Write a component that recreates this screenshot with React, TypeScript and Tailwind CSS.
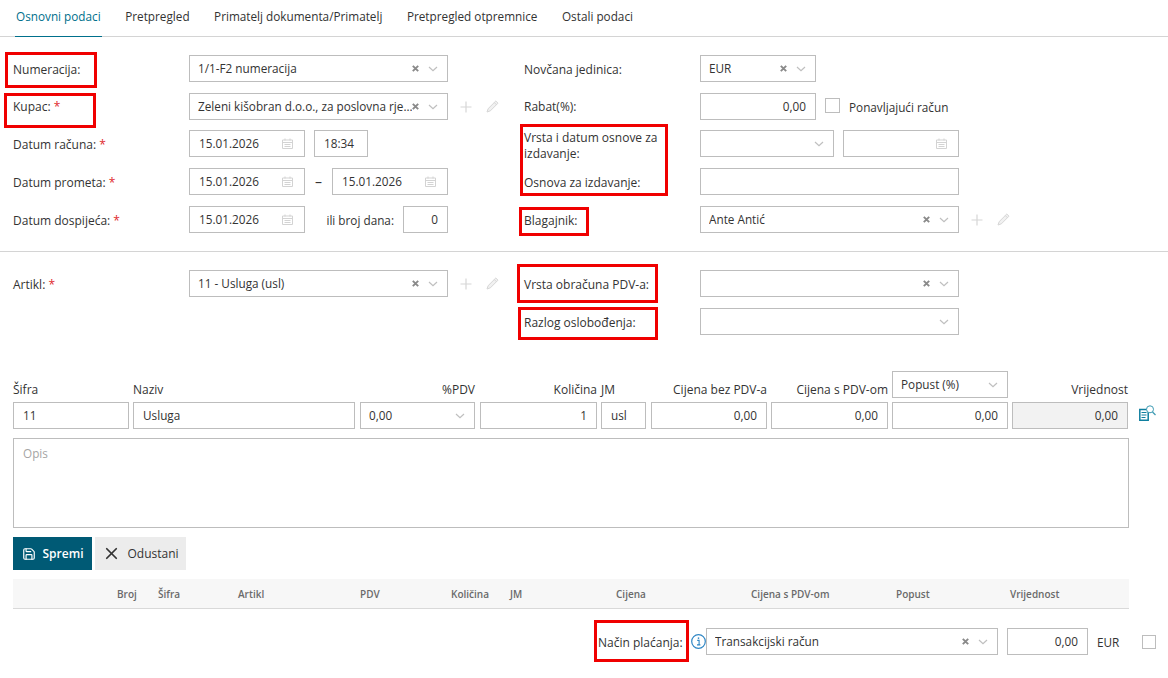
import { Save, X } from "lucide-react";
import type { ReactNode } from "react";

const tabs = ["Osnovni podaci", "Pretpregled", "Primatelj dokumenta/Primatelj", "Pretpregled otpremnice", "Ostali podaci"];

const itemColumns = "grid grid-cols-[120px_227px_120px_121px_50px_120px_121px_120px_116px]";

const listColumns = [
  { label: "", width: "w-[104px]" },
  { label: "Broj", width: "w-[41px]" },
  { label: "Šifra", width: "w-[80px]" },
  { label: "Artikl", width: "w-[122px]" },
  { label: "PDV", width: "w-[91px]" },
  { label: "Količina", width: "w-[59px]" },
  { label: "JM", width: "w-[106px]" },
  { label: "Cijena", width: "w-[135px]" },
  { label: "Cijena s PDV-om", width: "w-[145px]" },
  { label: "Popust", width: "w-[114px]" },
  { label: "Vrijednost", width: "w-[100px]" },
];

function ClearIcon() {
  return (
    <svg width="7" height="7" viewBox="0 0 7 7" className="shrink-0 mt-[2px]">
      <path d="M.8.8l5.4 5.4M6.2.8L.8 6.2" stroke="#8a8a8a" strokeWidth="1.9" />
    </svg>
  );
}

function Chevron() {
  return (
    <svg width="10" height="6" viewBox="0 0 10 6" className="shrink-0 mt-[2px]">
      <path d="M1 1l4 3.6L9 1" fill="none" stroke="#bfbfbf" strokeWidth="1.2" />
    </svg>
  );
}

function CalendarIcon() {
  return (
    <svg width="11" height="11" viewBox="0 0 11 11" className="shrink-0 mt-[2px]">
      <path d="M.5 2h10v8.5H.5zM.5 4.5h10M3 .5v2M8 .5v2M2.5 6.5h6M2.5 8.5h6" fill="none" stroke="#d3d3d3" />
    </svg>
  );
}

function AddEdit() {
  return (
    <div className="flex items-center h-[27px] gap-[14px] ml-[12px] shrink-0">
      <svg width="12" height="12" viewBox="0 0 12 12">
        <path d="M6 .5v11M.5 6h11" stroke="#d6d6d6" strokeWidth="1.2" />
      </svg>
      <svg width="13" height="13" viewBox="0 0 13 13">
        <path d="M9.8 1L12 3.2 4.4 10.8 1 12l1.2-3.4zM8.3 2.6l2.1 2.1" fill="#f1f1f1" stroke="#d6d6d6" />
      </svg>
    </div>
  );
}

function InfoIcon() {
  return (
    <svg width="15" height="15" viewBox="0 0 15 15" className="shrink-0">
      <circle cx="7.5" cy="7.5" r="6.8" fill="none" stroke="#2f86c4" strokeWidth="1.2" />
      <path d="M6.2 6.4h1.9v4.4M6 10.9h3.4" fill="none" stroke="#2f86c4" strokeWidth="1.1" />
      <rect x="6.8" y="3.4" width="1.4" height="1.5" fill="#2f86c4" />
    </svg>
  );
}

function LookupIcon() {
  return (
    <svg width="17" height="16" viewBox="0 0 17 16" className="absolute left-[1139px] top-[405px]">
      <path d="M.8 4.5h8.4v10.7H.8z" fill="none" stroke="#0f7f9f" strokeWidth="1.5" />
      <path d="M2.5 7.5h5M2.5 10h5M2.5 12.5h4" stroke="#0f7f9f" />
      <circle cx="11" cy="4.3" r="3.5" fill="white" stroke="#3d9ab3" />
      <path d="M13.5 7l3 3" stroke="#3d9ab3" strokeWidth="1.2" />
    </svg>
  );
}

function Box({ className = "", children }: { className?: string; children?: ReactNode }) {
  return (
    <div className={`h-[27px] border border-[#bdbdbd] bg-white flex items-center pb-[2px] shrink-0 ${className}`}>
      {children}
    </div>
  );
}

function SelectBox({ className, value, clear = true }: { className: string; value?: string; clear?: boolean }) {
  return (
    <Box className={`pl-[8px] pr-[9px] ${className}`}>
      <span className="flex-1 min-w-0 whitespace-nowrap overflow-hidden">{value}</span>
      {clear && <ClearIcon />}
      <span className="ml-[9px] flex"><Chevron /></span>
    </Box>
  );
}

function DateBox({ value = "", className = "w-[116px]" }: { value?: string; className?: string }) {
  return (
    <Box className={`pl-[9px] pr-[11px] justify-between ${className}`}>
      <span>{value}</span>
      <CalendarIcon />
    </Box>
  );
}

function NumberBox({ value, className }: { value: string; className: string }) {
  return <Box className={`justify-end pr-[9px] ${className}`}>{value}</Box>;
}

function Label({ text, required = false, className = "" }: { text: string; required?: boolean; className?: string }) {
  return (
    <div className={`text-[12px] font-medium pt-[2px] shrink-0 ${className}`}>
      {text}
      {required && <span className="text-[#e0282e]"> *</span>}
    </div>
  );
}

function Row({ height = "h-[38px]", labelWidth = "w-[176px]", label, children }: { height?: string; labelWidth?: string; label: ReactNode; children: ReactNode }) {
  return (
    <div className={`flex items-start ${height}`}>
      <div className={`shrink-0 h-[27px] flex items-center ${labelWidth}`}>{label}</div>
      {children}
    </div>
  );
}

function Highlight({ className }: { className: string }) {
  return <div className={`absolute border-[3px] border-[#f00000] ${className}`} />;
}

export default function App() {
  return (
    <div className="relative w-[1168px] h-[678px] bg-white overflow-hidden text-[11.75px] leading-[16px] text-[#333333] font-['Open_Sans',sans-serif]">
      {/* Tabs */}
      <div className="h-[37px] border-b border-[#d4d4d4] flex pl-[15px]">
        {tabs.map((tab, i) => (
          <div
            key={tab}
            className={`h-[37px] pt-[8px] px-[1px] mr-[22.5px] ${i === 0 ? "border-b border-[#00708c] text-[#00708c]" : ""}`}
          >
            {tab}
          </div>
        ))}
      </div>

      {/* Header form */}
      <div className="h-[215px] border-b border-[#d4d4d4] pt-[18px] flex">
        <div className="w-[511px] pl-[13px] shrink-0">
          <Row label={<Label text="Numeracija:" />}>
            <SelectBox className="w-[259px]" value="1/1-F2 numeracija" />
          </Row>
          <Row height="h-[37px]" label={<Label text="Kupac:" required className="!pt-[1px]" />}>
            <SelectBox className="w-[259px]" value="Zeleni kišobran d.o.o., za poslovna rje..." />
            <AddEdit />
          </Row>
          <Row label={<Label text="Datum računa:" required />}>
            <DateBox value="15.01.2026" />
            <Box className="w-[54px] ml-[9px] pl-[9px]">18:34</Box>
          </Row>
          <Row label={<Label text="Datum prometa:" required />}>
            <DateBox value="15.01.2026" />
            <div className="w-[27px] h-[27px] flex items-center justify-center text-[14px]">–</div>
            <DateBox value="15.01.2026" />
          </Row>
          <Row label={<Label text="Datum dospijeća:" required />}>
            <DateBox value="15.01.2026" />
            <div className="w-[98px] h-[27px] flex items-center justify-end pr-[9px]">ili broj dana:</div>
            <NumberBox value="0" className="w-[45px]" />
          </Row>
        </div>
        <div className="flex-1">
          <Row labelWidth="w-[189px]" label={<Label text="Novčana jedinica:" className="ml-[13px]" />}>
            <SelectBox className="w-[116px]" value="EUR" />
          </Row>
          <Row height="h-[37px]" labelWidth="w-[189px]" label={<Label text="Rabat(%):" className="ml-[13px] !pt-[1px]" />}>
            <NumberBox value="0,00" className="w-[116px]" />
            <div className="w-[15px] h-[15px] border border-[#bdbdbd] ml-[9px] mt-[5px]" />
            <div className="ml-[9px] h-[27px] flex items-center">Ponavljajući račun</div>
          </Row>
          <div className="flex items-start h-[38px]">
            <div className="w-[189px] shrink-0 pl-[13px] pr-[20px] text-[12px] font-medium">
              Vrsta i datum osnove za izdavanje:
            </div>
            <SelectBox className="w-[134px]" clear={false} />
            <DateBox className="w-[116px] ml-[9px]" />
          </div>
          <Row labelWidth="w-[189px]" label={<Label text="Osnova za izdavanje:" className="ml-[13px]" />}>
            <Box className="w-[259px]" />
          </Row>
          <Row labelWidth="w-[189px]" label={<Label text="Blagajnik:" className="ml-[13px]" />}>
            <SelectBox className="w-[259px]" value="Ante Antić" />
            <AddEdit />
          </Row>
        </div>
      </div>

      {/* Article */}
      <div className="pt-[18px] flex h-[119px]">
        <div className="w-[511px] pl-[13px] shrink-0">
          <Row label={<Label text="Artikl:" required />}>
            <SelectBox className="w-[259px]" value="11 - Usluga (usl)" />
            <AddEdit />
          </Row>
        </div>
        <div className="flex-1">
          <Row labelWidth="w-[189px]" label={<Label text="Vrsta obračuna PDV-a:" className="ml-[13px]" />}>
            <SelectBox className="w-[259px]" />
          </Row>
          <Row labelWidth="w-[189px]" label={<Label text="Razlog oslobođenja:" className="ml-[13px]" />}>
            <SelectBox className="w-[259px]" clear={false} />
          </Row>
        </div>
      </div>

      {/* Item entry */}
      <div className="pl-[13px]">
        <div className={`${itemColumns} h-[31px] items-end text-[12px] font-medium`}>
          <div className="pb-[4px]">Šifra</div>
          <div className="pb-[4px]">Naziv</div>
          <div className="pb-[4px] pr-[5px] text-right">%PDV</div>
          <div className="pb-[4px] pr-[4px] text-right">Količina</div>
          <div className="pb-[4px]">JM</div>
          <div className="pb-[4px] pr-[4px] text-right">Cijena bez PDV-a</div>
          <div className="pb-[4px] pr-[4px] text-right">Cijena s PDV-om</div>
          <div className="pb-[4px]">
            <SelectBox className="w-[116px] font-normal text-[11.75px]" value="Popust (%)" clear={false} />
          </div>
          <div className="pb-[4px] text-right">Vrijednost</div>
        </div>
        <div className={itemColumns}>
          <Box className="w-[116px] pl-[9px]">11</Box>
          <Box className="w-[222px] pl-[9px]">Usluga</Box>
          <SelectBox className="w-[115px]" value="0,00" clear={false} />
          <NumberBox value="1" className="w-[117px]" />
          <Box className="w-[45px] pl-[9px]">usl</Box>
          <NumberBox value="0,00" className="w-[116px]" />
          <NumberBox value="0,00" className="w-[117px]" />
          <NumberBox value="0,00" className="w-[116px]" />
          <NumberBox value="0,00" className="w-[116px] !bg-[#f2f2f2]" />
        </div>
        <div className="w-[1116px] h-[90px] mt-[9px] border border-[#bdbdbd] pl-[9px] pt-[6px] text-[#a5a5a5]">Opis</div>

        <div className="flex gap-[3px] mt-[9px]">
          <button className="w-[79px] h-[33px] bg-[#005a75] text-white text-[12px] font-semibold flex items-center justify-center gap-[7px]">
            <Save size={14} />
            Spremi
          </button>
          <button className="w-[91px] h-[33px] bg-[#ececec] text-[12px] font-medium flex items-center justify-center gap-[6px]">
            <X size={19} strokeWidth={2.2} />
            Odustani
          </button>
        </div>

        <div className="w-[1116px] h-[30px] mt-[9px] bg-[#f7f7f7] border-b border-[#d9d9d9] flex items-center text-[10px] font-semibold text-[#6a6a6a]">
          {listColumns.map((col) => (
            <div key={col.label} className={`shrink-0 ${col.width}`}>{col.label}</div>
          ))}
        </div>
      </div>

      {/* Payment */}
      <div className="flex items-center pl-[598px] mt-[19px]">
        <Label text="Način plaćanja:" className="w-[93px]" />
        <span className="flex"><InfoIcon /></span>
        <SelectBox className="w-[292px]" value="Transakcijski račun" />
        <NumberBox value="0,00" className="w-[81px] ml-[9px]" />
        <div className="ml-[9px] w-[45px]">EUR</div>
        <div className="w-[14px] h-[14px] border border-[#bdbdbd]" />
      </div>

      {/* Lookup icon next to the item row */}
      <LookupIcon />

      {/* Red annotation frames */}
      <Highlight className="left-[5px] top-[52px] w-[92px] h-[36px]" />
      <Highlight className="left-[4px] top-[93px] w-[92px] h-[35px]" />
      <Highlight className="left-[520px] top-[124px] w-[148px] h-[72px]" />
      <Highlight className="left-[519px] top-[207px] w-[70px] h-[29px]" />
      <Highlight className="left-[517px] top-[264px] w-[141px] h-[39px]" />
      <Highlight className="left-[518px] top-[307px] w-[140px] h-[33px]" />
      <Highlight className="left-[594px] top-[620px] w-[95px] h-[42px]" />
    </div>
  );
}
